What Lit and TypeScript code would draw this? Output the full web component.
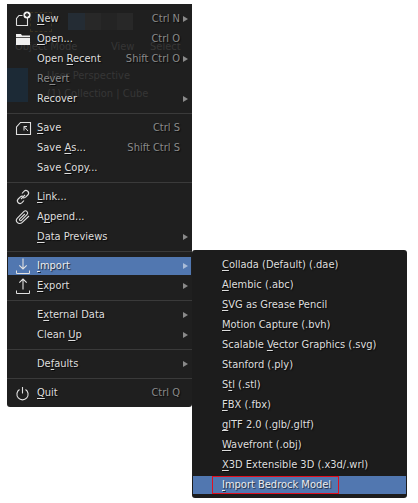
import { LitElement, html, css, svg, nothing } from "lit";
import { customElement } from "lit/decorators.js";

type Item = { l: string; k?: number; s?: string; a?: boolean; i?: string; d?: boolean; h?: boolean } | "sep";

const icons: Record<string, unknown> = {
  new: svg`<path d="M2.5 15.5V8.5L5 5.5H8.5M13.5 8V15.5H2.5"/><circle cx="13" cy="5" r="3.6" fill="#f0f0f0" stroke="none"/><path d="M13 3v4M11 5h4" stroke="#1e1e1e" stroke-width="1.3"/>`,
  open: svg`<path d="M2 4h5l1 1.5h8v1.5H2z M2 7.8h14v7.2H2z" fill="#f0f0f0" stroke="none"/>`,
  save: svg`<path d="M2.5 15.5V8L6.5 3.5H16.5V15.5Z"/><path d="M10 7.5V11.5M10 7.5H13M10 7.5L14 12" stroke-width="1"/>`,
  link: svg`<path d="M7 11L11 7"/><path d="M8 5.5l2-2.2a2.6 2.6 0 0 1 3.8 3.7l-2.2 2.2a2.6 2.6 0 0 1-2.6.5"/><path d="M10 12.5l-2 2.2a2.6 2.6 0 0 1-3.8-3.7l2.2-2.2a2.6 2.6 0 0 1 2.6-.5"/>`,
  append: svg`<path d="M15 8L8 14.6a3.2 3.2 0 0 1-4.6-4.5L10 3.4a2.2 2.2 0 0 1 3.1 3.1L7.4 12.4a1.1 1.1 0 0 1-1.6-1.6L10.8 6"/>`,
  import: svg`<path d="M9 1.5V12M5.3 8.3L9 12l3.7-3.7"/><path d="M2.5 13.5v3h13v-3" stroke-width="1"/>`,
  export: svg`<path d="M9 12.5V2M5.3 5.7L9 2l3.7 3.7"/><path d="M2.5 13.5v3h13v-3" stroke-width="1"/>`,
  quit: svg`<path d="M8.5 3V9.5"/><path d="M5.5 5.5A5.6 5.6 0 1 0 11.5 5.5"/>`,
};

const main: Item[] = [
  { l: "New", k: 0, s: "Ctrl N", a: true, i: "new" },
  { l: "Open...", k: 0, s: "Ctrl O", i: "open" },
  { l: "Open Recent", k: 5, s: "Shift Ctrl O", a: true },
  { l: "Revert", k: 2, d: true },
  { l: "Recover", a: true },
  "sep",
  { l: "Save", k: 0, s: "Ctrl S", i: "save" },
  { l: "Save As...", k: 5, s: "Shift Ctrl S" },
  { l: "Save Copy...", k: 5 },
  "sep",
  { l: "Link...", k: 0, i: "link" },
  { l: "Append...", k: 1, i: "append" },
  { l: "Data Previews", k: 0, a: true },
  "sep",
  { l: "Import", k: 0, a: true, i: "import", h: true },
  { l: "Export", k: 0, a: true, i: "export" },
  "sep",
  { l: "External Data", k: 1, a: true },
  { l: "Clean Up", k: 6, a: true },
  "sep",
  { l: "Defaults", k: 2, a: true },
  "sep",
  { l: "Quit", k: 0, s: "Ctrl Q", i: "quit" },
];

const sub: { l: string; k: number; box?: boolean }[] = [
  { l: "Collada (Default) (.dae)", k: 0 },
  { l: "Alembic (.abc)", k: 0 },
  { l: "SVG as Grease Pencil", k: 0 },
  { l: "Motion Capture (.bvh)", k: 0 },
  { l: "Scalable Vector Graphics (.svg)", k: 9 },
  { l: "Stanford (.ply)", k: -1 },
  { l: "Stl (.stl)", k: 1 },
  { l: "FBX (.fbx)", k: 0 },
  { l: "glTF 2.0 (.glb/.gltf)", k: 0 },
  { l: "Wavefront (.obj)", k: 0 },
  { l: "X3D Extensible 3D (.x3d/.wrl)", k: 0 },
  { l: "Import Bedrock Model", k: 0, box: true },
];

const label = (t: string, k?: number) =>
  k === undefined || k < 0
    ? t
    : html`${t.slice(0, k)}<u>${t[k]}</u>${t.slice(k + 1)}`;

@customElement("app-root")
export class AppRoot extends LitElement {
  static styles = css`
    :host {
      display: block;
      width: 418px;
      height: 503px;
      background: #fff;
      font-family: "DejaVu Sans Condensed", "DejaVu Sans", sans-serif;
      font-stretch: condensed;
      font-size: 11px;
      color: #dedede;
    }
    .wrap { display: flex; align-items: flex-start; padding: 4px 0 0 7px; }
    .menu {
      position: relative;
      width: 185px;
      height: 403px;
      box-sizing: border-box;
      padding: 5px 1px 0 1px;
      background: #1f1f1f;
      border-radius: 0 0 3px 3px;
      overflow: hidden;
    }
    .sub {
      position: relative;
      width: 215px;
      height: 248px;
      margin-top: 246px;
      box-sizing: border-box;
      padding: 5px 1px 0 1px;
      background: #1c1c1c;
      border-radius: 3px;
      overflow: hidden;
    }
    .row {
      position: relative;
      display: flex;
      align-items: center;
      height: 20px;
      line-height: 20px;
      white-space: nowrap;
      text-shadow: 1px 1px 1px rgba(0, 0, 0, 0.7);
    }
    u { text-underline-offset: 2px; text-decoration-thickness: 1px; }
    .hl { background: #5177b0; height: 18px; margin: 1px 0; color: #ececec; }
    .dim { color: #8a8a8a; }
    .ic { width: 29px; padding-left: 6px; box-sizing: border-box; flex: none; display: flex; }
    .ic svg { width: 18px; height: 18px; fill: none; stroke: #e0e0e0; stroke-width: 1.1; overflow: visible; }
    .lab { flex: 1; }
    .short { color: #8a8a8a; margin-right: 11px; }
    .arrow {
      position: absolute;
      right: 3px;
      top: 50%;
      margin-top: -3px;
      width: 0;
      height: 0;
      border-left: 5px solid #8a8a8a;
      border-top: 3px solid transparent;
      border-bottom: 3px solid transparent;
    }
    .hl .arrow { border-left-color: #a9bcd8; }
    .sep { height: 9px; display: flex; align-items: center; margin: 0 -1px; }
    .sep::before { content: ""; flex: 1; height: 1px; background: #3a3a3a; }
    .sub .row { padding-left: 29px; }
    .box {
      position: relative;
      padding: 0 8px 0 10px;
      margin-left: -10px;
      height: 18px;
      line-height: 18px;
      box-sizing: border-box;
      outline: 1px solid #e01020;
      outline-offset: -1px;
    }
    .ghost { position: absolute; white-space: nowrap; color: #363636; line-height: 14px; }
    .g1 { left: 8px; top: 36px; }
    .g2 { left: 104px; top: 36px; }
    .g3 { left: 143px; top: 36px; }
    .g4 { left: 40px; top: 65px; }
    .g5 { left: 40px; top: 83px; }
    .shape { position: absolute; }
    .s1 { left: 61px; top: 9px; width: 17px; height: 17px; background: #242c34; }
    .s2 { left: 78px; top: 9px; width: 16px; height: 17px; background: #282828; }
    .s3 { left: 94px; top: 9px; width: 16px; height: 17px; background: #242424; }
    .s4 { left: 110px; top: 9px; width: 16px; height: 17px; background: #282828; }
    .s5 { left: 0; top: 64px; width: 21px; height: 34px; background: #1c2a36; }
    .s6 { left: 23px; top: 8px; width: 22px; height: 20px; box-sizing: border-box; border: 1px dashed #3a3322; }
  `;

  private renderMain(it: Item) {
    if (it === "sep") return html`<div class="sep"></div>`;
    return html`<div class="row ${it.h ? "hl" : ""} ${it.d ? "dim" : ""}">
      <span class="ic">${it.i ? html`<svg viewBox="0 0 18 18">${icons[it.i]}</svg>` : nothing}</span>
      <span class="lab">${label(it.l, it.k)}</span>
      ${it.s ? html`<span class="short">${it.s}</span>` : nothing}
      ${it.a ? html`<span class="arrow"></span>` : nothing}
    </div>`;
  }

  render() {
    return html`<div class="wrap">
      <div class="menu">
        <span class="shape s1"></span><span class="shape s2"></span><span class="shape s3"></span>
        <span class="shape s4"></span><span class="shape s5"></span><span class="shape s6"></span>
        <span class="ghost g1">Object Mode</span>
        <span class="ghost g2">View</span>
        <span class="ghost g3">Select</span>
        <span class="ghost g4">User Perspective</span>
        <span class="ghost g5">(1) Collection | Cube</span>
        ${main.map((i) => this.renderMain(i))}
      </div>
      <div class="sub">
        ${sub.map((s) =>
          s.box
            ? html`<div class="row hl"><span class="box">${label(s.l, s.k)}</span></div>`
            : html`<div class="row"><span>${label(s.l, s.k)}</span></div>`
        )}
      </div>
    </div>`;
  }
}
